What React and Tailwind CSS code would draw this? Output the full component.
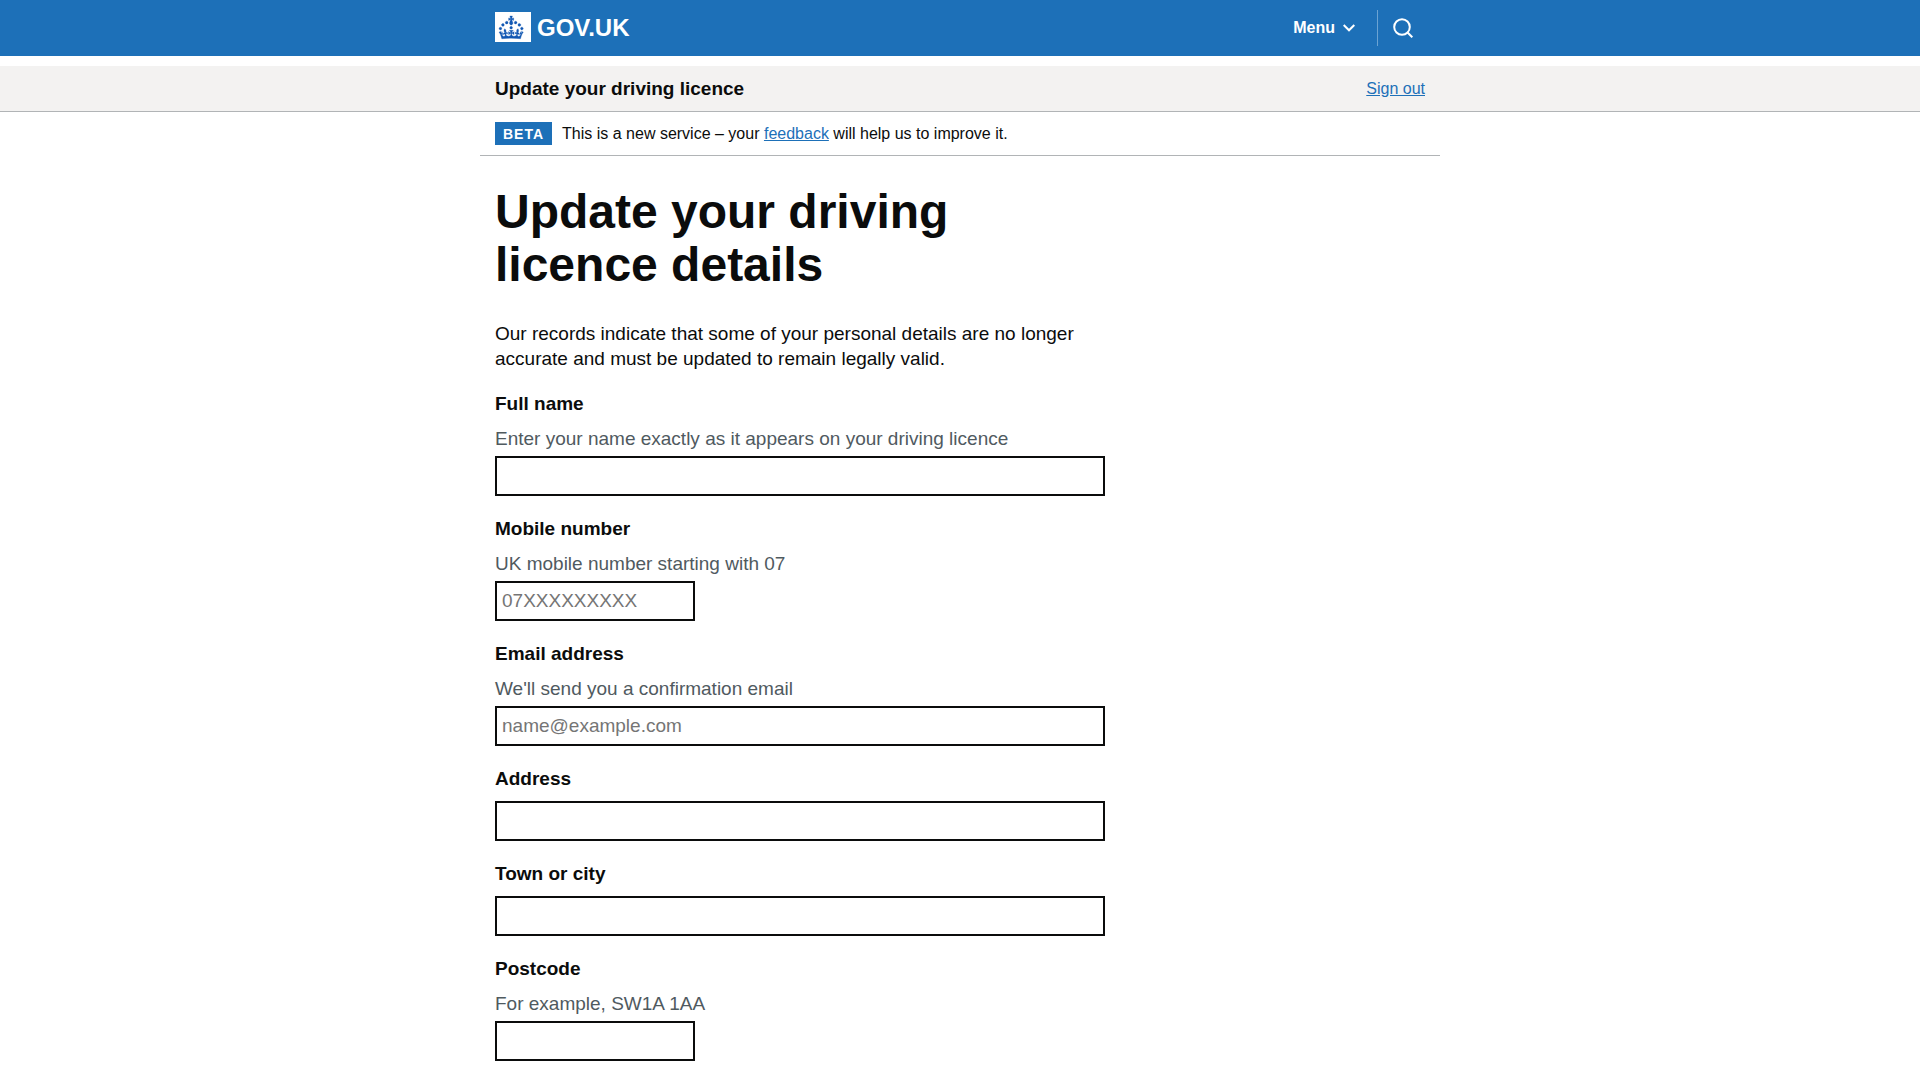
import React, { useState } from "react";

const fields = [
  {
    name: "fullName",
    label: "Full name",
    hint: "Enter your name exactly as it appears on your driving licence",
    type: "text",
  },
  {
    name: "mobile",
    label: "Mobile number",
    hint: "UK mobile number starting with 07",
    type: "tel",
    placeholder: "07XXXXXXXXX",
    short: true,
  },
  {
    name: "email",
    label: "Email address",
    hint: "We'll send you a confirmation email",
    type: "email",
    placeholder: "name@example.com",
  },
  { name: "address", label: "Address", type: "text" },
  { name: "town", label: "Town or city", type: "text" },
  {
    name: "postcode",
    label: "Postcode",
    hint: "For example, SW1A 1AA",
    type: "text",
    short: true,
  },
];

const Crown = () => (
  <svg
    viewBox="0 0 36 30"
    className="h-[30px] w-9 bg-white"
    fill="#1257b3"
    stroke="#1257b3"
    strokeWidth=".4"
    aria-hidden="true"
  >
    <path
      transform="translate(4 4) scale(.76)"
      d="M22.6 10.4c-1 .4-2-.1-2.4-1-.4-.9.1-2 1-2.4.9-.4 2 .1 2.4 1s-.1 2-1 2.4m-5.9 6.7c-.9.4-2-.1-2.4-1-.4-.9.1-2 1-2.4.9-.4 2 .1 2.4 1s-.1 2-1 2.4m10.8-3.7c-1 .4-2-.1-2.4-1-.4-.9.1-2 1-2.4.9-.4 2 .1 2.4 1s0 2-1 2.4m3.3 4.8c-1 .4-2-.1-2.4-1-.4-.9.1-2 1-2.4.9-.4 2 .1 2.4 1s-.1 2-1 2.4M17 4.7l2.3 1.2V2.5l-2.3.7-.2-.2.9-3h-3.4l.9 3-.2.2c-.1.1-2.3-.7-2.3-.7v3.4L15 4.7c.1.1.1.2.2.2l-1.3 4c-.1.2-.1.4-.1.6 0 1.1.8 2 1.9 2.2h.7c1-.2 1.9-1.1 1.9-2.1 0-.2 0-.4-.1-.6l-1.3-4c-.1-.2 0-.2.1-.3m-7.6 5.7c.9.4 2-.1 2.4-1 .4-.9-.1-2-1-2.4-.9-.4-2 .1-2.4 1s0 2 1 2.4m-5 3c.9.4 2-.1 2.4-1 .4-.9-.1-2-1-2.4-.9-.4-2 .1-2.4 1s.1 2 1 2.4m-3.2 4.8c.9.4 2-.1 2.4-1 .4-.9-.1-2-1-2.4-.9-.4-2 .1-2.4 1s0 2 1 2.4m14.8 11c4.4 0 8.6.3 12.3.8 1.1-4.5 2.4-7 3.7-8.8l-2.5-.9c.2 1.3.3 1.9 0 2.7-.4-.4-.8-1.1-1.1-2.3l-1.2 4c.7-.5 1.3-.8 2-.9-1.1 2.5-2.6 3.1-3.5 3-1.1-.2-1.7-1.2-1.5-2.1.3-1.2 1.5-1.5 2.1-.1 1.1-2.3-.8-3-2-2.3 1.9-1.9 2.1-3.5.6-5.6-2.1 1.6-2.1 3.2-1.2 5.5-1.2-1.4-3.2-.6-2.5 1.6.9-1.4 2.1-.5 1.9.8-.2 1.1-1.7 2.1-3.5 1.9-2.7-.2-2.9-2.1-2.9-3.6.7-.1 1.9.5 2.9 1.9l.4-4.3c-1.1 1.1-2.1 1.4-3.2 1.4.4-1.2 2.1-3 2.1-3h-5.4s1.7 1.9 2.1 3c-1.1 0-2.1-.2-3.2-1.4l.4 4.3c1-1.4 2.2-2 2.9-1.9-.1 1.5-.2 3.4-2.9 3.6-1.9.2-3.4-.8-3.5-1.9-.2-1.3 1-2.2 1.9-.8.7-2.3-1.2-3-2.5-1.6.9-2.2.9-3.9-1.2-5.5-1.5 2-1.3 3.7.6 5.6-1.2-.7-3.1 0-2 2.3.6-1.4 1.8-1.1 2.1.1.2.9-.3 1.9-1.5 2.1-.9.2-2.4-.5-3.5-3 .6 0 1.2.3 2 .9l-1.2-4c-.3 1.1-.7 1.9-1.1 2.3-.3-.8-.2-1.4 0-2.7l-2.9.9C1.3 23 2.6 25.5 3.7 30c3.7-.5 7.9-.8 12.3-.8"
    />
  </svg>
);

const Header = () => (
  <header className="bg-[#1d70b8] text-white">
    <div className="mx-auto flex h-14 max-w-[960px] justify-between px-[15px]">
      <a href="#" className="flex items-start gap-1.5 pt-3 text-2xl font-bold">
        <Crown />
        <span className="leading-8">GOV.UK</span>
      </a>
      <div className="flex items-center">
        <button type="button" className="flex items-center gap-2 pr-[22px] text-base font-bold">
          Menu
          <svg viewBox="0 0 12 8" className="h-2 w-3" fill="none" stroke="currentColor" strokeWidth="2" aria-hidden="true">
            <path d="M.7 1 6 6.3 11.3 1" />
          </svg>
        </button>
        <button type="button" aria-label="Search" className="flex h-9 items-center border-l border-[#6ba3d3] pr-3 pl-[15px]">
          <svg viewBox="0 0 20 20" className="size-5" fill="none" stroke="currentColor" strokeWidth="2" aria-hidden="true">
            <circle cx="9" cy="9" r="7.8" />
            <path d="m14.3 14.3 5 5" />
          </svg>
        </button>
      </div>
    </div>
  </header>
);

const ServiceBar = () => (
  <div className="mt-2.5 border-b border-[#b1b4b6] bg-[#f3f2f1]">
    <div className="mx-auto flex max-w-[960px] items-center justify-between px-[15px] py-2.5">
      <p className="text-[19px] leading-[25px] font-bold">Update your driving licence</p>
      <a href="#" className="text-base leading-5 text-[#1d70b8] underline">
        Sign out
      </a>
    </div>
  </div>
);

const PhaseBanner = () => (
  <div className="mx-auto flex max-w-[960px] items-center gap-2.5 border-b border-[#b1b4b6] px-[15px] py-2.5">
    <strong className="bg-[#1d70b8] px-2 pt-0.5 text-sm leading-[21px] tracking-[1px] text-white">BETA</strong>
    <p className="text-base leading-5">
      This is a new service – your{" "}
      <a href="#" className="text-[#1d70b8] underline">
        feedback
      </a>{" "}
      will help us to improve it.
    </p>
  </div>
);

const Field = ({ field, value, onChange }) => (
  <div className="mb-5">
    <label htmlFor={field.name} className="mb-2.5 block font-bold">
      {field.label}
    </label>
    {field.hint && (
      <p id={`${field.name}-hint`} className="mb-[5px] text-[#505a5f]">
        {field.hint}
      </p>
    )}
    <input
      id={field.name}
      name={field.name}
      type={field.type}
      value={value}
      onChange={onChange}
      placeholder={field.placeholder}
      aria-describedby={field.hint ? `${field.name}-hint` : undefined}
      className={`block h-10 border-2 border-[#0b0c0c] px-[5px] placeholder:text-[#757575] ${
        field.short ? "w-[200px]" : "w-full"
      }`}
    />
  </div>
);

const App = () => {
  const [formData, setFormData] = useState({});

  const handleInputChange = (e) => {
    setFormData({ ...formData, [e.target.name]: e.target.value });
  };

  return (
    <div className="bg-white font-['Liberation_Sans',Arial,sans-serif] text-[#0b0c0c]">
      <Header />
      <ServiceBar />
      <PhaseBanner />
      <main className="mx-auto max-w-[960px] px-[15px] pt-[29px]">
        <div className="max-w-[610px] text-[19px] leading-[25px]">
          <h1 className="mb-[30px] text-5xl leading-[53px] font-bold">Update your driving licence details</h1>
          <p className="mb-5">
            Our records indicate that some of your personal details are no longer accurate and must be updated to
            remain legally valid.
          </p>
          <form onSubmit={(e) => e.preventDefault()}>
            {fields.map((field) => (
              <Field
                key={field.name}
                field={field}
                value={formData[field.name] || ""}
                onChange={handleInputChange}
              />
            ))}
          </form>
        </div>
      </main>
    </div>
  );
};

export default App;
